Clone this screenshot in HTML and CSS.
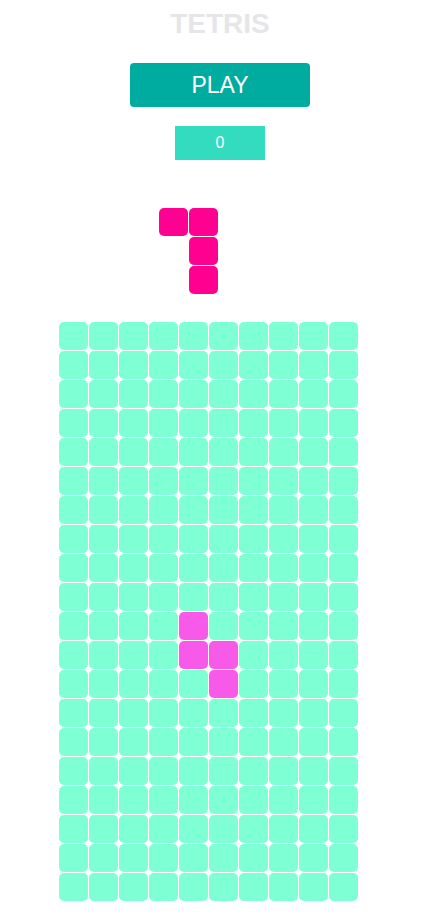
FILE: index.html
```html
<!DOCTYPE html>
<html>
<head>
<meta charset="utf-8">
<link rel="stylesheet" href="styles.css">
</head>
<body>
<main class="app">
  <h1 class="title">TETRIS</h1>
  <button class="play">PLAY</button>
  <div class="score">0</div>
  <div class="next" id="next"></div>
  <div class="board" id="board"></div>
</main>
<script src="app.js"></script>
</body>
</html>
```
FILE: styles.css
```css
html, body {
  margin: 0;
  padding: 0;
  background: #ffffff;
  font-family: "Liberation Sans", Arial, sans-serif;
}
.app {
  display: flex;
  flex-direction: column;
  align-items: center;
  padding: 8px 0 0 17px;
  width: 423px;
  box-sizing: border-box;
}
.title {
  margin: 0;
  font-size: 28px;
  line-height: 32px;
  font-weight: bold;
  color: #e6e6e8;
}
.play {
  margin-top: 23px;
  width: 180px;
  height: 44px;
  border: none;
  border-radius: 4px;
  background: #00ac9f;
  color: #ffffff;
  font-family: "Liberation Sans", Arial, sans-serif;
  font-size: 23px;
  padding: 0;
}
.score {
  margin-top: 19px;
  width: 90px;
  height: 34px;
  background: #33dbbf;
  color: #ffffff;
  font-size: 16px;
  display: flex;
  align-items: center;
  justify-content: center;
}
.next {
  align-self: flex-start;
  margin-left: 142px;
  margin-top: 48px;
  display: grid;
  grid-template-columns: repeat(2, 29px);
  grid-auto-rows: 28px;
  column-gap: 1px;
  row-gap: 1px;
}
.board {
  align-self: flex-start;
  margin-left: 42px;
  margin-top: 28px;
  display: grid;
  grid-template-columns: repeat(10, 29px);
  grid-auto-rows: 28px;
  column-gap: 1px;
  row-gap: 1px;
}
.cell {
  border-radius: 5px;
  background: #7fffd4;
}
.cell.empty {
  background: transparent;
}
.cell.active {
  background: #f75ae8;
}
.cell.preview {
  background: #ff0090;
}
```
FILE: app.js
```js
var next = document.getElementById('next');
var nextShape = [[1,1],[0,1],[0,1]];
nextShape.forEach(function(row){
  row.forEach(function(v){
    var d = document.createElement('div');
    d.className = 'cell ' + (v ? 'preview' : 'empty');
    next.appendChild(d);
  });
});
var board = document.getElementById('board');
var active = {'10,4':1,'11,4':1,'11,5':1,'12,5':1};
for (var r = 0; r < 20; r++) {
  for (var c = 0; c < 10; c++) {
    var d = document.createElement('div');
    d.className = 'cell' + (active[r + ',' + c] ? ' active' : '');
    board.appendChild(d);
  }
}
```
